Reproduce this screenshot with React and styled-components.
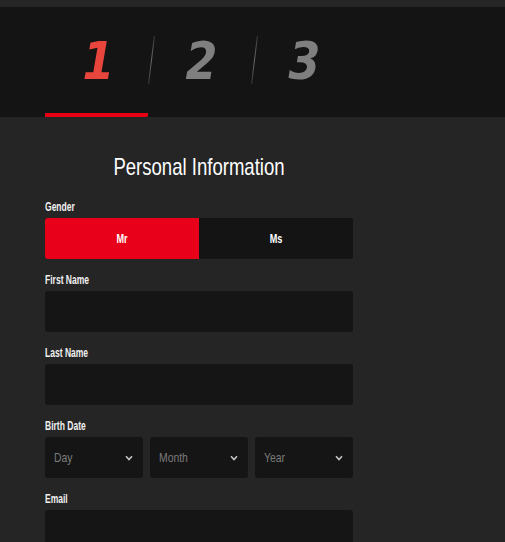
import React from "react";
import styled, { createGlobalStyle } from "styled-components";

const Global = createGlobalStyle`
  html, body { margin: 0; padding: 0; background: #252525; }
  body { font-family: "Liberation Sans", Arial, sans-serif; }
  * { box-sizing: border-box; }
`;

const Page = styled.div`
  background: #252525;
  min-height: 542px;
  padding-top: 7px;
`;

const StepsBar = styled.div`
  background: #141414;
  height: 110px;
  display: flex;
  padding-left: 45px;
`;

const Step = styled.div`
  position: relative;
  width: 103px;
  height: 110px;
  padding-top: 4px;
  border-bottom: 4px solid ${(p) => (p.$active ? "#e60014" : "transparent")};
  border-bottom-right-radius: ${(p) => (p.$active ? "2px" : "0")};
  display: flex;
  align-items: center;
  justify-content: center;
  &::before {
    content: "";
    display: ${(p) => (p.$first ? "none" : "block")};
    position: absolute;
    left: 3px;
    top: 29px;
    width: 1px;
    height: 48px;
    background: linear-gradient(#3a3a3a, #6a6a6a 50%, #3a3a3a);
    transform: rotate(7deg);
  }
`;

const StepNum = styled.span`
  font-family: "DejaVu Sans Condensed", "DejaVu Sans", sans-serif;
  font-stretch: condensed;
  font-weight: 700;
  font-style: italic;
  font-size: 51px;
  line-height: 52px;
  color: ${(p) => (p.$active ? "#e8463d" : "#7f7f7f")};
  display: inline-block;
  transform: translateX(2px);
`;

const Body = styled.div`
  padding: 0 45px;
`;

const Form = styled.div`
  width: 308px;
  display: flex;
  flex-direction: column;
`;

const Title = styled.h1`
  margin: 36px 0 19px;
  font-size: 24px;
  line-height: 28px;
  font-weight: 400;
  color: #ffffff;
  text-align: center;
  transform: scaleX(0.773);
  transform-origin: center;
`;

const Field = styled.div`
  display: flex;
  flex-direction: column;
  margin-bottom: 14px;
`;

const Label = styled.div`
  font-size: 12px;
  line-height: 14px;
  font-weight: 700;
  color: #f0f0f0;
  margin-bottom: 4px;
  transform: scaleX(0.71);
  transform-origin: left center;
  white-space: nowrap;
`;

const Toggle = styled.div`
  display: grid;
  grid-template-columns: 154px 1fr;
  height: 41px;
  border-radius: 3px;
  overflow: hidden;
  background: #141414;
`;

const ToggleOption = styled.div`
  display: flex;
  align-items: center;
  justify-content: center;
  background: ${(p) => (p.$selected ? "#e8001a" : "#141414")};
`;

const ToggleText = styled.span`
  display: inline-block;
  font-size: 13px;
  font-weight: 700;
  color: #ffffff;
  transform: scaleX(0.7);
`;

const Input = styled.div`
  height: 41px;
  background: #151515;
  border-radius: 3px;
`;

const SelectRow = styled.div`
  display: grid;
  grid-template-columns: repeat(3, 1fr);
  gap: 7px;
`;

const SelectBox = styled.div`
  height: 41px;
  background: #151515;
  border-radius: 3px;
  display: flex;
  align-items: center;
  justify-content: space-between;
  padding: 0 10px 0 9px;
`;

const Placeholder = styled.span`
  display: inline-block;
  font-size: 13.5px;
  color: #7b7b7b;
  transform: scaleX(0.77);
  transform-origin: left center;
`;

const Chevron = () => (
  <svg width="8" height="6" viewBox="0 0 8 6">
    <path d="M1 1.2 L4 4.5 L7 1.2" fill="none" stroke="#c4c4c4" strokeWidth="1.6" />
  </svg>
);

export default function App() {
  return (
    <>
      <Global />
      <Page>
        <StepsBar>
          <Step $active $first>
            <StepNum $active>1</StepNum>
          </Step>
          <Step>
            <StepNum>2</StepNum>
          </Step>
          <Step>
            <StepNum>3</StepNum>
          </Step>
        </StepsBar>
        <Body>
          <Form>
            <Title>Personal Information</Title>
            <Field>
              <Label>Gender</Label>
              <Toggle>
                <ToggleOption $selected>
                  <ToggleText>Mr</ToggleText>
                </ToggleOption>
                <ToggleOption>
                  <ToggleText>Ms</ToggleText>
                </ToggleOption>
              </Toggle>
            </Field>
            <Field>
              <Label>First Name</Label>
              <Input />
            </Field>
            <Field>
              <Label>Last Name</Label>
              <Input />
            </Field>
            <Field>
              <Label>Birth Date</Label>
              <SelectRow>
                <SelectBox>
                  <Placeholder>Day</Placeholder>
                  <Chevron />
                </SelectBox>
                <SelectBox>
                  <Placeholder>Month</Placeholder>
                  <Chevron />
                </SelectBox>
                <SelectBox>
                  <Placeholder>Year</Placeholder>
                  <Chevron />
                </SelectBox>
              </SelectRow>
            </Field>
            <Field>
              <Label>Email</Label>
              <Input />
            </Field>
          </Form>
        </Body>
      </Page>
    </>
  );
}
